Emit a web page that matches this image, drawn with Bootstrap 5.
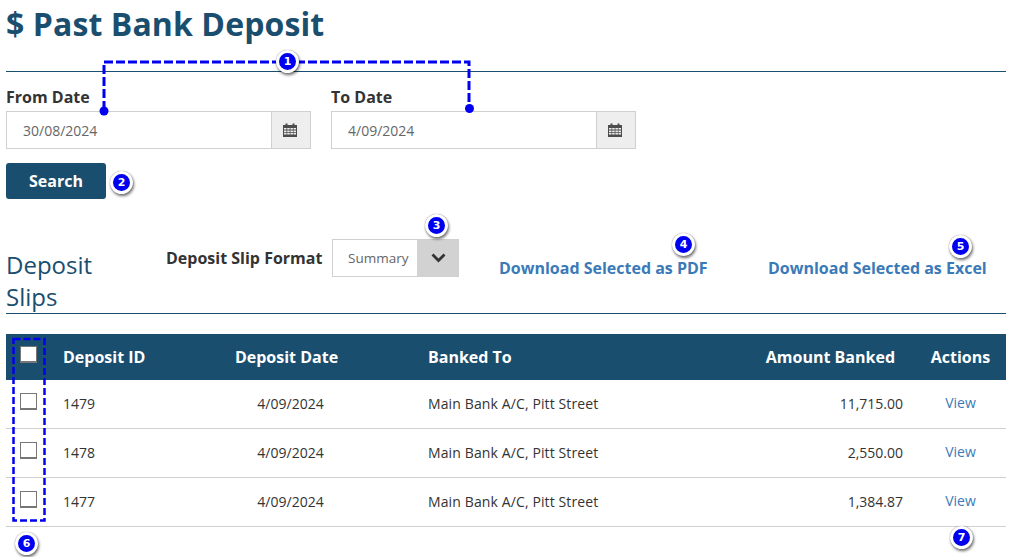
<!DOCTYPE html>
<html lang="en">
<head>
<meta charset="utf-8">
<title>Past Bank Deposit</title>
<link href="https://cdn.jsdelivr.net/npm/bootstrap@5.3.0/dist/css/bootstrap.min.css" rel="stylesheet">
<style>
html,body{height:557px;overflow:hidden}
body{font-family:"Open Sans",sans-serif;color:#333;background:#fff;font-size:14px;position:relative}
.page-wrap{padding:0 5px 0 6px}
.page-title{font-size:32px;font-weight:700;color:#1a4e6e;line-height:40px;margin:4px 0 0;letter-spacing:.1px}
.title-rule{border-top:1px solid #1a4e6e;margin-top:27px;height:0}
.date-row{display:flex;gap:20px;margin-top:15px}
.date-field{width:305px}
.date-label{display:block;font-size:16px;font-weight:700;line-height:21px;margin:0 0 3px;color:#333}
.date-group{height:38px;display:flex;border:1.5px solid #d0d0d0}
.date-input{flex:1;min-width:0;border:0;padding:1px 16px 0;font-size:14px;color:#666;font-family:inherit;outline:0;background:transparent}
.date-addon{width:39px;background:#eee;border-left:1.5px solid #d0d0d0;display:flex;align-items:center;justify-content:center}
.date-addon svg{position:relative;left:-1px}
.search-btn{width:100px;height:36px;margin-top:14px;background:#1a4e6e;border:0;border-radius:3px;color:#fff;font-size:16px;font-weight:700;padding:0;display:block}
.search-btn:hover{background:#1a4e6e;color:#fff}
.slip-row{display:flex;align-items:flex-start;margin-top:40px;height:74px}
.slip-heading{width:160px;padding-right:50px;font-size:24px;font-weight:400;line-height:32px;color:#1a4e6e;margin:10px 0 0}
.format-label{font-size:16px;font-weight:700;line-height:21px;margin:9px 10px 0 0;width:156px;white-space:nowrap;color:#333}
.format-select{width:127px;height:38px;border:1.5px solid #d0d0d0;border-radius:0;padding:0 0 0 15px;font-family:inherit;font-size:13.5px;color:#666;appearance:none;-webkit-appearance:none;outline:0;
background:linear-gradient(#d2d2d2,#d2d2d2) right top/41px 100% no-repeat #fff}
.select-box{position:relative;width:127px;height:38px}
.select-chev{position:absolute;right:13px;top:14px;pointer-events:none}
.dl-link{font-size:16px;font-weight:700;color:#3a7ab8;text-decoration:none;white-space:nowrap;line-height:20px;margin-top:19px}
.dl-pdf{margin-left:40px;width:269px}
.slip-rule{border-top:1px solid #1a4e6e;height:0;margin-top:0}
.deposit-table{width:1000px;margin:20px 0 0;table-layout:fixed;border-collapse:separate;border-spacing:0}
.deposit-table th{background:#1a4e6e;color:#fff;font-size:16px;font-weight:700;height:46px;vertical-align:middle;padding:0 12px;white-space:nowrap;border:0}
.deposit-table td{height:49px;padding:0 12px 1px;vertical-align:middle;font-size:14px;color:#333;border:0;border-bottom:1.5px solid #d0d0d0}
.deposit-table th.chk-cell,.deposit-table td.chk-cell{padding:0 0 0 14px}
.date-col{text-align:center}
.deposit-table th.date-col{padding-right:20px}
.amount-col{text-align:right}
.deposit-table th.amount-col{padding-right:20px}
.actions-col{text-align:center}
.bank-cell{letter-spacing:.12px}
.view-link{color:#3a7ab8;text-decoration:none;position:relative;top:-1px}
.slip-check{display:block;width:17px;height:17px;margin:0;appearance:none;-webkit-appearance:none;background:#fff;border:1.5px solid #767676;border-bottom-width:2px;position:relative;top:-3px}
.annot-layer{position:absolute;left:0;top:0;pointer-events:none}
.step-mark{position:absolute;width:23px;height:23px;border-radius:50%;background:#0000f0;border:3px solid #fff;box-shadow:1px 2px 3px rgba(0,0,0,.55),0 0 1px rgba(0,0,0,.5);color:#fff;font-family:"DejaVu Sans",sans-serif;font-size:11px;font-weight:700;line-height:17px;text-align:center}
</style>
</head>
<body>
<div class="page-wrap">
  <h1 class="page-title">$ Past Bank Deposit</h1>
  <div class="title-rule"></div>
  <div class="date-row">
    <div class="date-field">
      <label class="date-label" for="fromDate">From Date</label>
      <div class="date-group">
        <input id="fromDate" class="date-input" value="30/08/2024">
        <span class="date-addon"><svg width="14" height="14" viewBox="0 0 14 14"><path fill="#4d4d4d" d="M0 2h2.500V.5h2V2h5V.5h2V2H14v12H0z"/><path fill="#eee" d="M1 5h2.500v1.600H1zM4.200 5h2.500v1.600H4.200zM7.400 5h2.500v1.600H7.400zM10.500 5H13v1.600h-2.500zM1 7.400h2.500v1.600H1zM4.200 7.400h2.500v1.600H4.200zM7.400 7.400h2.500v1.600H7.400zM10.500 7.400H13v1.600h-2.500zM1 9.800h2.500v1.600H1zM4.200 9.800h2.500v1.600H4.200zM7.400 9.800h2.500v1.600H7.400zM10.500 9.800H13v1.600h-2.500z"/></svg></span>
      </div>
    </div>
    <div class="date-field">
      <label class="date-label" for="toDate">To Date</label>
      <div class="date-group">
        <input id="toDate" class="date-input" value="4/09/2024">
        <span class="date-addon"><svg width="14" height="14" viewBox="0 0 14 14"><path fill="#4d4d4d" d="M0 2h2.500V.5h2V2h5V.5h2V2H14v12H0z"/><path fill="#eee" d="M1 5h2.500v1.600H1zM4.200 5h2.500v1.600H4.200zM7.400 5h2.500v1.600H7.400zM10.500 5H13v1.600h-2.500zM1 7.400h2.500v1.600H1zM4.200 7.400h2.500v1.600H4.200zM7.400 7.400h2.500v1.600H7.400zM10.500 7.400H13v1.600h-2.500zM1 9.800h2.500v1.600H1zM4.200 9.800h2.500v1.600H4.200zM7.400 9.800h2.500v1.600H7.400zM10.500 9.800H13v1.600h-2.500z"/></svg></span>
      </div>
    </div>
  </div>
  <button type="button" class="btn search-btn">Search</button>
  <div class="slip-row">
    <h2 class="slip-heading">Deposit Slips</h2>
    <div class="format-label">Deposit Slip Format</div>
    <div class="select-box">
      <select class="format-select"><option>Summary</option></select>
      <svg class="select-chev" width="15" height="10" viewBox="0 0 15 10"><path d="M1.500 1.500l6 6 6-6" fill="none" stroke="#333" stroke-width="2.800"/></svg>
    </div>
    <a href="#" class="dl-link dl-pdf">Download Selected as PDF</a>
    <a href="#" class="dl-link">Download Selected as Excel</a>
  </div>
  <div class="slip-rule"></div>
  <table class="deposit-table">
    <colgroup><col style="width:45px"><col style="width:114px"><col style="width:251px"><col style="width:284px"><col style="width:215px"><col style="width:91px"></colgroup>
    <thead>
      <tr>
        <th class="chk-cell"><input type="checkbox" class="slip-check" aria-label="Select all"></th>
        <th>Deposit ID</th>
        <th class="date-col">Deposit Date</th>
        <th>Banked To</th>
        <th class="amount-col">Amount Banked</th>
        <th class="actions-col">Actions</th>
      </tr>
    </thead>
    <tbody>
      <tr>
        <td class="chk-cell"><input type="checkbox" class="slip-check" aria-label="Select 1479"></td>
        <td>1479</td><td class="date-col">4/09/2024</td><td class="bank-cell">Main Bank A/C, Pitt Street</td><td class="amount-col">11,715.00</td><td class="actions-col"><a href="#" class="view-link">View</a></td>
      </tr>
      <tr>
        <td class="chk-cell"><input type="checkbox" class="slip-check" aria-label="Select 1478"></td>
        <td>1478</td><td class="date-col">4/09/2024</td><td class="bank-cell">Main Bank A/C, Pitt Street</td><td class="amount-col">2,550.00</td><td class="actions-col"><a href="#" class="view-link">View</a></td>
      </tr>
      <tr>
        <td class="chk-cell"><input type="checkbox" class="slip-check" aria-label="Select 1477"></td>
        <td>1477</td><td class="date-col">4/09/2024</td><td class="bank-cell">Main Bank A/C, Pitt Street</td><td class="amount-col">1,384.87</td><td class="actions-col"><a href="#" class="view-link">View</a></td>
      </tr>
    </tbody>
  </table>
</div>
<svg class="annot-layer" width="1011" height="557" viewBox="0 0 1011 557">
  <path d="M104 110V62H469V109" fill="none" stroke="#0000f0" stroke-width="3" stroke-dasharray="9 3"/>
  <circle cx="104" cy="111" r="4.500" fill="#0000f0"/>
  <circle cx="469.500" cy="108.500" r="4.500" fill="#0000f0"/>
  <rect x="13.500" y="339" width="31" height="181.500" fill="none" stroke="#0000f0" stroke-width="2.500" stroke-dasharray="7 3"/>
</svg>
<span class="step-mark" style="left:276px;top:50px">1</span>
<span class="step-mark" style="left:110px;top:171px">2</span>
<span class="step-mark" style="left:425px;top:214px">3</span>
<span class="step-mark" style="left:672px;top:233px">4</span>
<span class="step-mark" style="left:949px;top:235px">5</span>
<span class="step-mark" style="left:15px;top:532px">6</span>
<span class="step-mark" style="left:950px;top:526px">7</span>
<script src="https://cdn.jsdelivr.net/npm/bootstrap@5.3.0/dist/js/bootstrap.bundle.min.js"></script>
</body>
</html>
